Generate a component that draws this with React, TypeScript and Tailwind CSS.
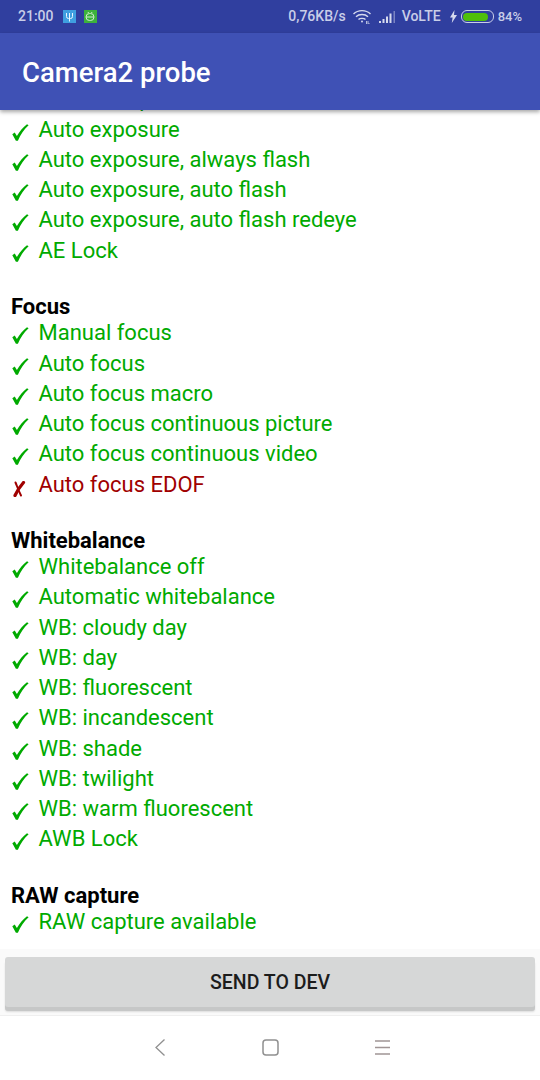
const sections = [
  {
    title: "",
    items: ["Manual exposure", "Auto exposure", "Auto exposure, always flash", "Auto exposure, auto flash", "Auto exposure, auto flash redeye", "AE Lock"],
  },
  {
    title: "Focus",
    items: ["Manual focus", "Auto focus", "Auto focus macro", "Auto focus continuous picture", "Auto focus continuous video", "!Auto focus EDOF"],
  },
  {
    title: "Whitebalance",
    items: ["Whitebalance off", "Automatic whitebalance", "WB: cloudy day", "WB: day", "WB: fluorescent", "WB: incandescent", "WB: shade", "WB: twilight", "WB: warm fluorescent", "AWB Lock"],
  },
  {
    title: "RAW capture",
    items: ["RAW capture available"],
  },
];

function Check() {
  return (
    <svg className="mt-[9px] ml-[1px] mr-[9.500px]" width="17" height="17" viewBox="0 0 17 17" fill="currentColor">
      <path d="M0.3 10.300 2.700 8.600 4.900 12C7.500 7.500 11 3.500 15 0.300L16.600 1.200C12 5.500 8.500 10.500 5.900 16.800H3.900Z" />
    </svg>
  );
}

function Cross() {
  return (
    <svg className="mt-[11px] ml-[2px] mr-[12.500px]" width="13" height="16" viewBox="0 0 13 16" fill="none" stroke="currentColor" strokeLinecap="round">
      <path d="M2.500 1.500C4 5 5.500 9.500 8 14.500" strokeWidth="2" />
      <path d="M10.500 1.500C7 5.500 4 10 2 14.500" strokeWidth="3.200" />
    </svg>
  );
}

function Row({ label }: { label: string }) {
  const bad = label.startsWith("!");
  return (
    <div className={`relative flex h-[30.25px] items-start text-[22px] ${bad ? "text-[#a00000]" : "text-[#00aa00]"}`}>
      {bad ? <Cross /> : <Check />}
      <span className="leading-[30.25px]">{bad ? label.slice(1) : label}</span>
    </div>
  );
}

function StatusBar() {
  return (
    <div className="flex h-[33px] items-center bg-[#303f9f] px-[18px] text-[14px] font-medium text-[#c9cee8]">
      <span>21:00</span>
      <div className="ml-[9px] flex h-[13px] w-[13px] items-center justify-center bg-[#3f9fe0]">
        <svg width="9" height="10" viewBox="0 0 9 10" fill="none" stroke="#e8f4ff" strokeWidth="1">
          <path d="M1.500 1v3.500a2 2 0 0 0 2 2h2a2 2 0 0 0 2-2V1M4.500 1v8.500" />
        </svg>
      </div>
      <div className="ml-[8px] flex h-[13px] w-[13px] items-center justify-center bg-[#3cb23c]">
        <svg width="10" height="10" viewBox="0 0 10 10" fill="none" stroke="#cdeccd" strokeWidth="1">
          <rect x="1" y="1.500" width="8" height="7" rx="3.500" />
          <path d="M1 5h8M3.500 1 3 0M6.500 1 7 0" />
        </svg>
      </div>
      <div className="flex-1" />
      <span>0,76KB/s</span>
      <svg className="ml-[7px]" width="18" height="15" viewBox="0 0 18 15" fill="none" stroke="#d6daee" strokeWidth="1.400">
        <path d="M0.500 5c4.500-4.500 12.500-4.500 17 0M3 7.800c3-3 9-3 12 0M5.500 10.500c1.500-1.500 5.500-1.500 7 0" />
        <circle cx="9" cy="12.500" r="1" fill="#d6daee" stroke="none" />
        <path d="M13.500 12v3M15 12v3h2" strokeWidth="0.800" />
      </svg>
      <svg className="ml-[8px]" width="17" height="12" viewBox="0 0 17 12" fill="#d6daee">
        <rect x="0" y="10" width="2" height="2" />
        <rect x="3.500" y="8" width="2" height="4" />
        <rect x="7" y="5.500" width="2" height="6.500" />
        <rect x="10.500" y="2.500" width="2" height="9.500" />
        <rect x="14.500" y="0" width="1.500" height="12" opacity="0.45" />
      </svg>
      <span className="ml-[6px]">VoLTE</span>
      <svg className="ml-[9px]" width="7" height="13" viewBox="0 0 7 13" fill="#d6daee">
        <path d="M4.500 0 0 7.500h2.600L1.800 13 7 5H4z" />
      </svg>
      <div className="ml-[4px] flex h-[13px] w-[33px] items-center rounded-[6px] border border-[#c9cee8] p-[1.500px]">
        <div className="h-full w-[25px] rounded-[4px] bg-[#4fbf0a]" />
      </div>
      <span className="ml-[4px] text-[13px]">84%</span>
    </div>
  );
}

export default function App() {
  return (
    <div className="flex h-[1080px] w-[540px] flex-col overflow-hidden bg-white font-['Roboto',sans-serif]">
      <StatusBar />
      <div className="relative z-10 flex h-[77px] items-center bg-[#3f51b5] pt-[3px] pl-[22px] text-[27.500px] font-medium text-white shadow-[0_2px_4px_rgba(0,0,0,0.35)]">
        Camera2 probe
      </div>
      <div className="min-h-0 flex-1 overflow-hidden pl-[11px]">
        <div className="mt-[-25.700px]">
          {sections.map((s) => (
            <div key={s.items[0]} className="mb-[26.450px]">
              {s.title && <div className="h-[26px] pt-[2px] text-[22px] leading-[26px] font-bold text-black">{s.title}</div>}
              {s.items.map((it) => (
                <Row key={it} label={it} />
              ))}
            </div>
          ))}
        </div>
      </div>
      <div className="h-[66px] bg-[#fafafa] px-[5px] pt-[8px]">
        <button className="h-[50px] w-full rounded-[3px] bg-[#d6d7d7] pt-[2px] text-[19.500px] font-medium text-[#1c1c1c] shadow-[0_4px_0_#c6c7c7,0_5px_2px_rgba(0,0,0,0.12)]">
          SEND TO DEV
        </button>
      </div>
      <div className="flex h-[65px] items-center border-t border-[#efefef] bg-white pb-[1px] pl-[155px] text-[#909090]">
        <svg width="10" height="17" viewBox="0 0 10 17" fill="none" stroke="currentColor" strokeWidth="1.300">
          <path d="M9.500 0.500 1 8.500l8.500 8" />
        </svg>
        <svg className="ml-[97px]" width="17" height="17" viewBox="0 0 17 17" fill="none" stroke="currentColor" strokeWidth="1.500">
          <rect x="1" y="1" width="15" height="15" rx="3" />
        </svg>
        <svg className="ml-[96px]" width="15" height="15" viewBox="0 0 15 15" fill="none" stroke="#a09595" strokeWidth="1.300">
          <path d="M0 1h15M0 7.500h15M0 14h15" />
        </svg>
      </div>
    </div>
  );
}
